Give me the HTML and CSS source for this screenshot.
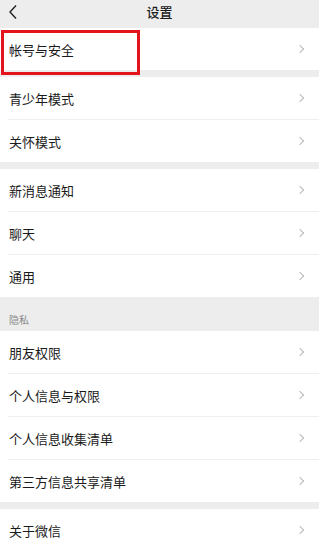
FILE: index.html
```html
<!DOCTYPE html>
<html lang="zh">
<head>
<meta charset="utf-8">
<link rel="stylesheet" href="styles.css">
</head>
<body>
<div class="page">
  <header class="nav">
    <svg class="back" width="10" height="16" viewBox="0 0 10 16"><path d="M8 1.5 L2 8 L8 14.5" fill="none" stroke="#222" stroke-width="1.4"/></svg>
    <div class="title">设置</div>
  </header>

  <section class="group">
    <div class="row first"><span>帐号与安全</span><i class="chev"></i></div>
  </section>
  <div class="gap"></div>
  <section class="group">
    <div class="row"><span>青少年模式</span><i class="chev"></i></div>
    <div class="row"><span>关怀模式</span><i class="chev"></i></div>
  </section>
  <div class="gap"></div>
  <section class="group">
    <div class="row"><span>新消息通知</span><i class="chev"></i></div>
    <div class="row"><span>聊天</span><i class="chev"></i></div>
    <div class="row"><span>通用</span><i class="chev"></i></div>
  </section>
  <div class="label">隐私</div>
  <section class="group">
    <div class="row"><span>朋友权限</span><i class="chev"></i></div>
    <div class="row"><span>个人信息与权限</span><i class="chev"></i></div>
    <div class="row"><span>个人信息收集清单</span><i class="chev"></i></div>
    <div class="row"><span>第三方信息共享清单</span><i class="chev"></i></div>
  </section>
  <div class="gap"></div>
  <section class="group">
    <div class="row"><span>关于微信</span><i class="chev"></i></div>
  </section>

  <div class="highlight"></div>
</div>
</body>
</html>
```
FILE: styles.css
```css
* { box-sizing: border-box; margin: 0; padding: 0; }
html, body { background: #ededed; }
body {
  width: 319px;
  height: 545px;
  overflow: hidden;
  font-family: "Noto Sans CJK SC", "Noto Sans", sans-serif;
  color: #1a1a1a;
}
.page { position: relative; }
.nav {
  height: 28px;
  display: flex;
  align-items: center;
  justify-content: center;
  position: relative;
  background: #ededed;
}
.back { position: absolute; left: 8px; top: 4px; }
.title { font-size: 13px; font-weight: 500; line-height: 1; margin-top: -5px; }
.group { background: #fff; }
.row {
  height: 43px;
  display: flex;
  align-items: center;
  justify-content: space-between;
  padding: 1px 14px 0 9px;
  font-size: 13px;
}
.group .row:first-child { height: 42px; padding-top: 0; }
.row.first { height: 45px; }
.row + .row {
  background: linear-gradient(#efefef, #efefef) no-repeat 8px 0 / calc(100% - 8px) 1px;
}
.row span { line-height: 1; }
.chev {
  width: 6px;
  height: 6px;
  border-top: 1px solid #b8b8b8;
  border-right: 1px solid #b8b8b8;
  transform: rotate(45deg);
  margin-right: 2px;
}
.gap { height: 7px; }
.label {
  height: 34px;
  font-size: 10px;
  color: #8a8a8a;
  padding: 18px 0 0 9px;
  line-height: 1;
}
.highlight {
  position: absolute;
  left: 1px;
  top: 30px;
  width: 139px;
  height: 45px;
  border: 3px solid #e3141e;
}
```
